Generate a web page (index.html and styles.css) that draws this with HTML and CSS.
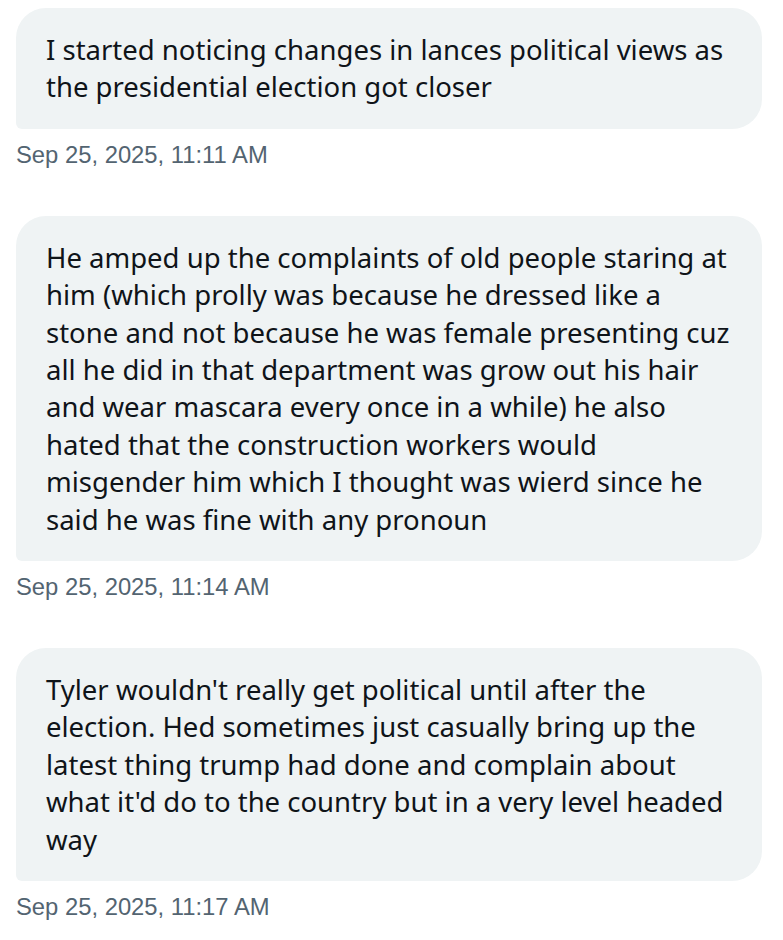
FILE: index.html
```html
<!DOCTYPE html>
<html lang="en">
<head>
<meta charset="utf-8">
<title>Messages</title>
<link rel="stylesheet" href="styles.css">
</head>
<body>
<main class="thread">
  <div class="msg">
    <div class="bubble">I started noticing changes in lances political views as<br>the presidential election got closer</div>
    <div class="time">Sep 25, 2025, 11:11 AM</div>
  </div>
  <div class="msg">
    <div class="bubble">He amped up the complaints of old people staring at<br>him (which prolly was because he dressed like a<br>stone and not because he was female presenting cuz<br>all he did in that department was grow out his hair<br>and wear mascara every once in a while) he also<br>hated that the construction workers would<br>misgender him which I thought was wierd since he<br>said he was fine with any pronoun</div>
    <div class="time">Sep 25, 2025, 11:14 AM</div>
  </div>
  <div class="msg">
    <div class="bubble">Tyler wouldn't really get political until after the<br>election. Hed sometimes just casually bring up the<br>latest thing trump had done and complain about<br>what it'd do to the country but in a very level headed<br>way</div>
    <div class="time">Sep 25, 2025, 11:17 AM</div>
  </div>
</main>
</body>
</html>
```
FILE: styles.css
```css
html, body {
  margin: 0;
  padding: 0;
  background: #ffffff;
}
.thread {
  display: flex;
  flex-direction: column;
  gap: 46px;
  padding: 8px 21px 0 16px;
}
.msg {
  display: flex;
  flex-direction: column;
  gap: 11px;
}
.bubble {
  background: #eff3f4;
  color: #0f1419;
  font-family: "Noto Sans", "Open Sans", sans-serif;
  font-size: 27.5px;
  line-height: 37.4px;
  padding: 23px 30px;
  border-radius: 30px 30px 30px 6px;
  white-space: nowrap;
}
.time {
  color: #536471;
  font-family: "Liberation Sans", Arial, sans-serif;
  font-size: 23.8px;
  line-height: 30px;
}
```
